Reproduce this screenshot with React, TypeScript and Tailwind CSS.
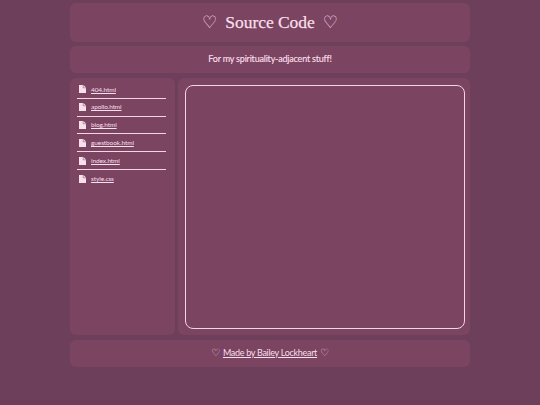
const files = ["404.html", "apollo.html", "blog.html", "guestbook.html", "index.html", "style.css"];

function FileIcon() {
  return (
    <svg width="7" height="8" viewBox="0 0 7 8" className="shrink-0">
      <path d="M0 0H4.4L7 2.6V8H0Z" fill="#f8dfec" />
      <path d="M4.2 0V2.8H7" fill="none" stroke="#7b4460" strokeWidth="0.5" />
    </svg>
  );
}

export default function App() {
  return (
    <div className="h-[405px] w-[540px] overflow-hidden bg-[#6d3f5a] text-[#f8dfec] font-['Lato',sans-serif]">
      <div className="mx-auto flex w-[400px] flex-col pt-[3px]">
        {/* header */}
        <div className="flex h-[39px] items-center justify-center gap-[8px] rounded-md bg-[#7b4460]">
          <span className="font-['DejaVu_Sans',sans-serif] text-[17px] leading-none">♡</span>
          <h1 className="font-['Liberation_Serif',serif] text-[17.5px] font-normal leading-none tracking-[-0.05px] [-webkit-text-stroke:0.25px_#f8dfec]">Source Code</h1>
          <span className="font-['DejaVu_Sans',sans-serif] text-[17px] leading-none">♡</span>
        </div>

        <div className="mt-1 flex h-[27px] items-center justify-center rounded-md bg-[#7b4460] pb-px text-[9px] tracking-[-0.2px] [-webkit-text-stroke:0.15px_#f8dfec]">
          For my spirituality-adjacent stuff!
        </div>

        <div className="mt-[5px] flex h-[257px] gap-[3px]">
          {/* file list */}
          <div className="w-[105px] rounded-md bg-[#7b4460] pl-[7px] pr-[9px] pt-[3px]">
            {files.map((f, i) => (
              <div
                key={f}
                className={`flex h-[17.8px] items-center gap-[5px] pl-[2px] ${i < files.length - 1 ? "border-b border-[#f3d5e5]" : ""}`}
              >
                <FileIcon />
                <a href="#" className="text-[6.5px] tracking-[-0.1px] underline">{f}</a>
              </div>
            ))}
          </div>

          {/* code panel */}
          <div className="flex-1 rounded-md bg-[#7b4460] pb-[6px] pl-[7px] pr-[5px] pt-[7px]">
            <div className="h-full w-full rounded-lg border-[1.5px] border-[#f3d5e5]" />
          </div>
        </div>

        <div className="mt-[5px] flex h-[27px] items-center justify-center gap-[3px] rounded-md bg-[#7b4460] pb-[2px] text-[9px] tracking-[-0.3px]">
          <span className="font-['DejaVu_Sans',sans-serif] text-[10px]">♡</span>
          <a href="#" className="underline">Made by Bailey Lockheart</a>
          <span className="font-['DejaVu_Sans',sans-serif] text-[10px]">♡</span>
        </div>
      </div>
    </div>
  );
}
